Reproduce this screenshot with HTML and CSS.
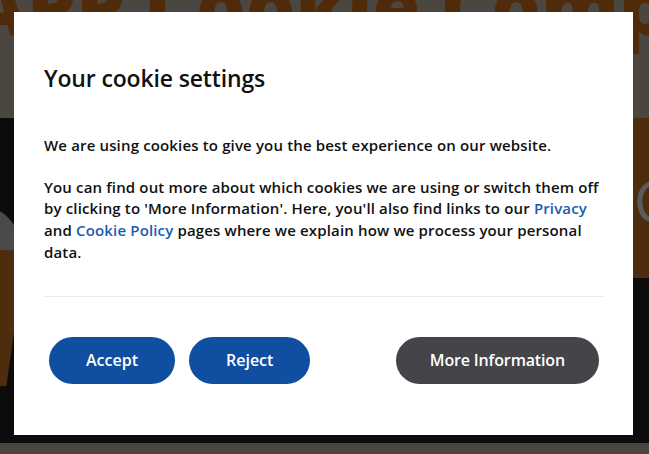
FILE: index.html
```html
<!DOCTYPE html>
<html lang="en">
<head>
    <meta charset="UTF-8">
    <meta name="viewport" content="width=device-width, initial-scale=1.0">
    <title>Cookie Compliance</title>
    <link rel="stylesheet" href="styles.css">
</head>
<body>
    <div class="page">
        <header class="site-header">
            <div class="site-title">APP Cookie Compliance</div>
        </header>
        <section class="hero">
            <div class="hero-shape hero-circle"></div>
            <div class="hero-shape hero-wedge"></div>
            <div class="hero-shape hero-block"></div>
            <div class="hero-shape hero-letter">G</div>
        </section>
        <footer class="site-footer"></footer>
    </div>

    <div class="cookie-overlay">
        <div class="cookie-modal">
            <h1 class="cookie-title">Your cookie settings</h1>
            <p class="cookie-text">We are using cookies to give you the best experience on our website.</p>
            <p class="cookie-text">You can find out more about which cookies we are using or switch them off by clicking to 'More Information'. Here, you'll also find links to our <a href="#">Privacy</a> and <a href="#">Cookie Policy</a> pages where we explain how we process your personal data.</p>
            <hr class="cookie-divider">
            <div class="cookie-actions">
                <button class="btn btn-primary">Accept</button>
                <button class="btn btn-primary">Reject</button>
                <button class="btn btn-secondary">More Information</button>
            </div>
        </div>
    </div>
</body>
</html>
```

FILE: styles.css
```css
body {
    margin: 0;
    font-family: "Open Sans", Arial, sans-serif;
    background-color: #0c0c0c;
    overflow: hidden;
}
.page {
    display: flex;
    flex-direction: column;
    height: 454px;
}
.site-header {
    height: 118px;
    background-color: #4b4740;
    overflow: hidden;
}
.site-title {
    margin: -34px 0 0 -30px;
    font-family: "Open Sans", Arial, sans-serif;
    font-weight: 800;
    font-size: 78px;
    line-height: 1;
    white-space: nowrap;
    color: #4f2b0b;
}
.hero {
    flex: 1;
    position: relative;
    overflow: hidden;
    background-color: #0c0c0c;
}
.hero-shape {
    position: absolute;
}
.hero-circle {
    left: -60px;
    top: 88px;
    width: 80px;
    height: 80px;
    border-radius: 50%;
    background-color: #4a4a4a;
}
.hero-wedge {
    left: -20px;
    top: 132px;
    width: 36px;
    height: 136px;
    background-color: #4e2c0e;
    transform: skewX(-8deg);
}
.hero-block {
    right: -10px;
    top: 0;
    width: 40px;
    height: 160px;
    background-color: #4e2c0e;
}
.hero-letter {
    right: -28px;
    top: 52px;
    font-size: 60px;
    line-height: 1;
    color: #5a5a5e;
}
.site-footer {
    height: 11px;
    background-color: #4a463f;
}
.cookie-overlay {
    position: fixed;
    inset: 0;
    padding: 12px 16px 0 14px;
}
.cookie-modal {
    box-sizing: border-box;
    height: 423px;
    padding: 50px 28px 0 30px;
    background-color: #fff;
    color: #111;
}
.cookie-title {
    margin: 0 0 41px;
    font-size: 23px;
    font-weight: 600;
    letter-spacing: -0.15px;
}
.cookie-text {
    margin: 0 0 20px;
    font-size: 15px;
    font-weight: 600;
    line-height: 21.7px;
    letter-spacing: 0.15px;
}
.cookie-text a {
    color: #1c5bb3;
    text-decoration: none;
}
.cookie-divider {
    margin: 32px 0 0;
    border: none;
    border-top: 1px solid #ececec;
}
.cookie-actions {
    display: flex;
    gap: 14px;
    padding: 40px 6px 0 5px;
}
.btn {
    height: 47px;
    padding: 0 37px;
    border: none;
    border-radius: 24px;
    font-family: inherit;
    font-size: 16px;
    font-weight: 600;
    color: #fff;
    cursor: pointer;
}
.btn-primary {
    background-color: #104ea2;
}
.btn-secondary {
    margin-left: auto;
    padding: 0 34px;
    letter-spacing: -0.15px;
    background-color: #444449;
}
```
